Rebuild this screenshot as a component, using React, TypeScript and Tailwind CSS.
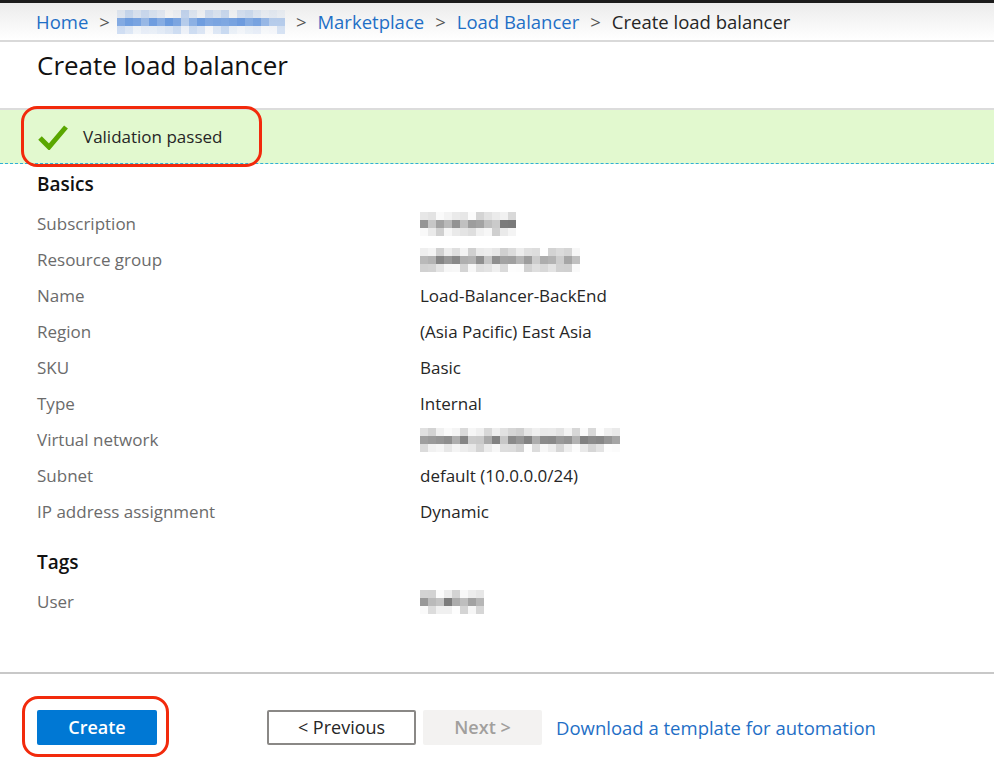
import React from "react";

const font = { fontFamily: '"Open Sans", "Noto Sans", sans-serif' };

// pseudo-random pixelated blur, like the redacted bits in the screenshot
function Mosaic({ cols, rows, seed, tone }: { cols: number; rows: number; seed: number; tone: "gray" | "blue" }) {
  let s = seed;
  const rnd = () => {
    s = (s * 9301 + 49297) % 233280;
    return s / 233280;
  };
  const cells = [];
  for (let r = 0; r < rows; r++) {
    for (let c = 0; c < cols; c++) {
      const mid = r === Math.floor(rows / 2);
      const v = rnd();
      const a = mid ? 0.25 + v * 0.45 : v * 0.25;
      const color = tone === "blue" ? `rgba(40,110,210,${a})` : `rgba(60,60,60,${a})`;
      cells.push(<div key={r + "-" + c} style={{ background: color }} />);
    }
  }
  return (
    <div
      className="grid"
      style={{ gridTemplateColumns: `repeat(${cols}, 8px)`, gridTemplateRows: `repeat(${rows}, 8px)` }}
    >
      {cells}
    </div>
  );
}

function Chevron() {
  return <span className="px-[11px] text-[#555]">&gt;</span>;
}

const rows: { label: string; value?: string; blur?: [number, number] }[] = [
  { label: "Subscription", blur: [12, 7] },
  { label: "Resource group", blur: [20, 3] },
  { label: "Name", value: "Load-Balancer-BackEnd" },
  { label: "Region", value: "(Asia Pacific) East Asia" },
  { label: "SKU", value: "Basic" },
  { label: "Type", value: "Internal" },
  { label: "Virtual network", blur: [25, 11] },
  { label: "Subnet", value: "default (10.0.0.0/24)" },
  { label: "IP address assignment", value: "Dynamic" },
];

function Row({ label, value, blur }: { label: string; value?: string; blur?: [number, number] }) {
  return (
    <div className="flex h-[36px] items-center">
      <div className="w-[383px] text-[#6b6b6b]">{label}</div>
      {value ? <div className="text-[#262626]">{value}</div> : <Mosaic cols={blur![0]} rows={3} seed={blur![1]} tone="gray" />}
    </div>
  );
}

export default function App() {
  return (
    <div className="h-[778px] w-[994px] overflow-hidden bg-white text-[17px]" style={font}>
      <div className="h-[3px] bg-[#1c1c1c]" />
      <div className="flex h-[39px] items-center border-b-2 border-[#d9d9d9] bg-gradient-to-b from-[#ececec] to-white pl-[36px] text-[18.5px]">
        <span className="text-[#1f6fc6]">Home</span>
        <Chevron />
        <div className="-ml-[4px]">
          <Mosaic cols={21} rows={3} seed={5} tone="blue" />
        </div>
        <Chevron />
        <span className="text-[#1f6fc6]">Marketplace</span>
        <Chevron />
        <span className="text-[#1f6fc6]">Load Balancer</span>
        <Chevron />
        <span className="text-[#262626]">Create load balancer</span>
      </div>
      <div className="flex h-[66px] items-start pl-[37px] pt-[4px] text-[26px] text-[#111]">Create load balancer</div>

      <div className="relative border-t-2 border-[#dcdcdc]">
        <div className="flex h-[54px] items-center gap-[14px] border-b border-dashed border-[#2fb0d6] bg-[#e2f9cf] pl-[37px] text-[#262626]">
          <svg width="32" height="26" viewBox="0 0 32 26">
            <path d="M3 14 L12 23 L29 3" fill="none" stroke="#5aa700" strokeWidth="5" strokeLinejoin="miter" />
          </svg>
          <span>Validation passed</span>
        </div>
        <div className="absolute left-[21px] top-[-4px] h-[61px] w-[241px] rounded-[16px] border-[3px] border-[#f22a0c]" />
      </div>

      <div className="pl-[37px]">
        <div className="flex h-[40px] items-center text-[19px] font-semibold text-[#111]">Basics</div>
        <div className="pt-[2px]">
          {rows.map((r) => (
            <Row key={r.label} {...r} />
          ))}
        </div>
        <div className="mt-[11px] flex h-[42px] items-center text-[19px] font-semibold text-[#111]">Tags</div>
        <div className="pt-[1px]">
          <Row label="User" blur={[8, 17]} />
        </div>
      </div>

      <div className="mt-[52px] border-t-2 border-[#c8c8c8]">
        <div className="flex items-center pl-[37px] pt-[36px]">
          <div className="relative">
            <button className="h-[35px] w-[120px] rounded-[2px] bg-[#0078d4] text-[18px] font-semibold text-white">Create</button>
            <div className="absolute left-[-15px] top-[-14px] h-[61px] w-[147px] rounded-[16px] border-[3px] border-[#f22a0c]" />
          </div>
          <button className="ml-[110px] h-[35px] w-[149px] rounded-[2px] border-2 border-[#8a8886] bg-white text-[18px] text-[#262626]">
            &lt; Previous
          </button>
          <button className="ml-[7px] h-[35px] w-[119px] rounded-[2px] bg-[#f3f2f1] text-[18px] font-semibold text-[#a19f9d]">Next &gt;</button>
          <span className="ml-[14px] text-[18.5px] text-[#1f6fc6]">Download a template for automation</span>
        </div>
      </div>
    </div>
  );
}
